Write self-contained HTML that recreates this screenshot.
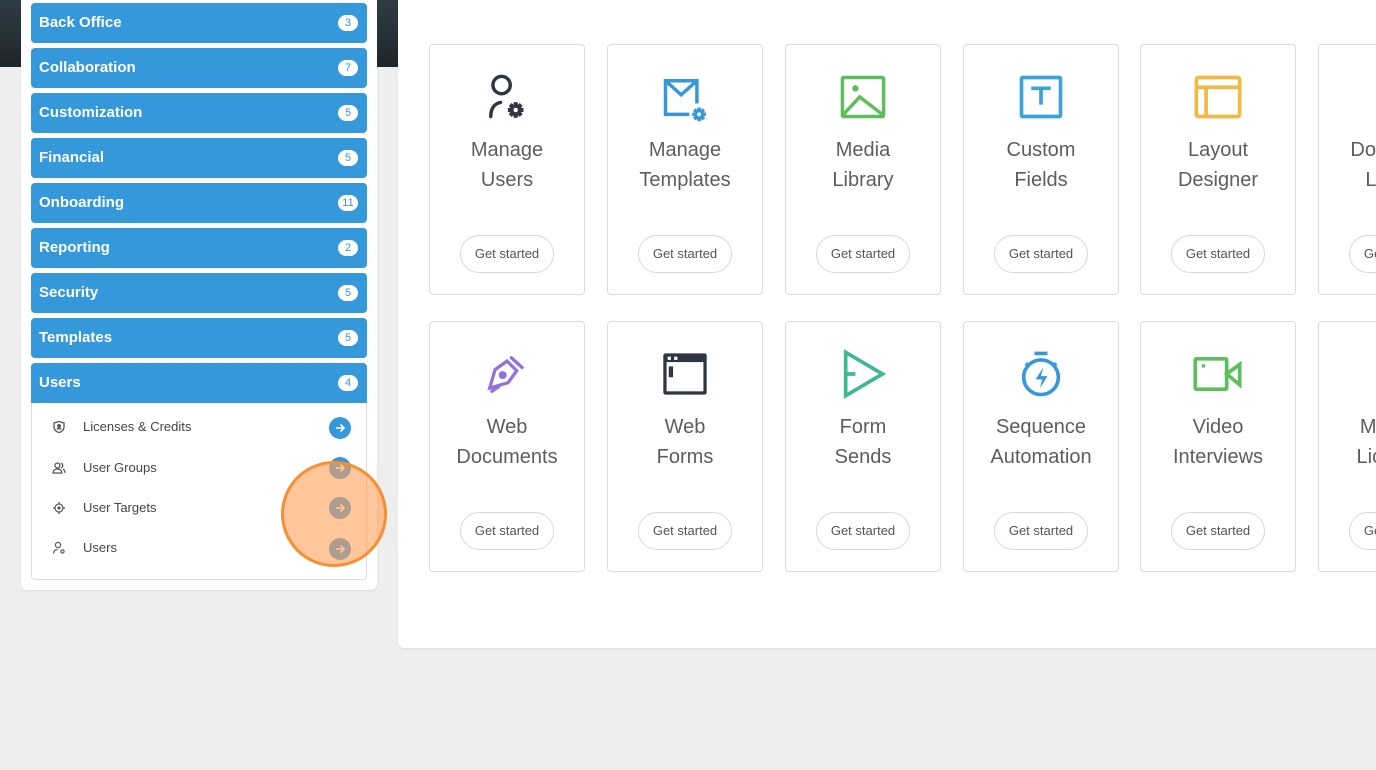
<!DOCTYPE html>
<html><head><meta charset="utf-8"><style>
*{box-sizing:border-box;margin:0;padding:0}
body{width:1376px;height:770px;background:#eeeeee;font-family:"Liberation Sans",sans-serif;position:relative;overflow:hidden}
.hdr{position:absolute;left:0;top:0;width:398px;height:67px;background:linear-gradient(#2e3c44,#1f262b)}
.side{position:absolute;left:21px;top:-8px;width:356px;height:598px;background:#fff;border-radius:6px;box-shadow:0 1px 2px rgba(0,0,0,.08)}
.mi{position:absolute;left:31px;width:336px;height:40px;background:#3598db;border-radius:4px;color:#fff;font-weight:bold;font-size:15px;line-height:40px;padding-left:8px}
.mi.open{border-radius:4px 4px 0 0}
.bd{position:absolute;right:9px;top:12px;height:16px;min-width:20px;padding:0 4px;border-radius:8px;background:#fff;color:#3598db;font-size:11px;font-weight:normal;line-height:16px;text-align:center}
.sub{position:absolute;left:31px;top:403px;width:336px;height:177px;border:1px solid #ddd;border-top:none;border-radius:0 0 4px 4px}
.si{position:absolute;left:52px;font-size:13px;color:#444;height:20px;line-height:20px;padding-left:31px}
.si svg{position:absolute;left:0;top:3px}
.ar{position:absolute;left:329px;width:22px;height:22px;border-radius:50%;background:#3598db}
.ar svg{position:absolute;left:5px;top:5px}
.main{position:absolute;left:398px;top:0;width:978px;height:648px;background:#fff;border-radius:0 0 0 6px;box-shadow:0 1px 2px rgba(0,0,0,.08)}
.card{position:absolute;width:156px;height:251px;border:1px solid #dcdcdc;border-radius:4px;background:#fff;text-align:center}
.card .ic{position:absolute;left:50%;top:26px;margin-left:-26px;width:52px;height:52px}
.card .t{position:absolute;left:-20px;right:-20px;top:90px;font-size:20px;line-height:30px;color:#5d5d5d;white-space:nowrap}
.card .b{position:absolute;left:50%;top:190px;margin-left:-47px;width:94px;height:38px;border:1px solid #d8d8d8;border-radius:19px;font-size:13px;line-height:36px;color:#555}
.circ{position:absolute;left:281px;top:461px;width:106px;height:106px;border-radius:50%;background:rgba(255,160,90,.6);border:3px solid #f78f32}
</style></head><body>
<svg width="0" height="0" style="position:absolute"><defs>
<g id="gear"><g><rect x="-1.6" y="-6" width="3.2" height="12"/><rect x="-1.6" y="-6" width="3.2" height="12" transform="rotate(45)"/><rect x="-1.6" y="-6" width="3.2" height="12" transform="rotate(90)"/><rect x="-1.6" y="-6" width="3.2" height="12" transform="rotate(135)"/><circle r="4.3"/></g><circle r="1.7" fill="#fff"/></g>
</defs></svg>
<div class="hdr"></div>
<div class="side"></div>
<div class="mi" style="top:3px">Back Office<span class="bd">3</span></div>
<div class="mi" style="top:48px">Collaboration<span class="bd">7</span></div>
<div class="mi" style="top:93px">Customization<span class="bd">5</span></div>
<div class="mi" style="top:138px">Financial<span class="bd">5</span></div>
<div class="mi" style="top:183px">Onboarding<span class="bd">11</span></div>
<div class="mi" style="top:228px">Reporting<span class="bd">2</span></div>
<div class="mi" style="top:273px">Security<span class="bd">5</span></div>
<div class="mi" style="top:318px">Templates<span class="bd">5</span></div>
<div class="mi open" style="top:363px">Users<span class="bd">4</span></div>
<div class="sub"></div>
<div class="si" style="top:417px"><svg width="14" height="14" viewBox="0 0 14 14" fill="none" stroke="#555" stroke-width="1.3"><path d="M7 1.5L12 3v4c0 3-2.5 5-5 5.5C4.5 12 2 10 2 7V3z"/><circle cx="7" cy="6" r="1.3" fill="#555"/><path d="M4.8 9.3c.6-1 3.8-1 4.4 0"/></svg>Licenses &amp; Credits</div>
<div class="si" style="top:458px"><svg width="14" height="14" viewBox="0 0 14 14" fill="none" stroke="#555" stroke-width="1.2"><circle cx="5.5" cy="4.5" r="2.5"/><path d="M1 12c0-2.5 2-4 4.5-4s4.5 1.5 4.5 4z"/><path d="M9 2.2a2.4 2.4 0 0 1 0 4.6M11 8.2c1.3.6 2 1.8 2 3.8"/></svg>User Groups</div>
<div class="si" style="top:498px"><svg width="14" height="14" viewBox="0 0 14 14" fill="none" stroke="#555" stroke-width="1.2"><circle cx="7" cy="7" r="4"/><circle cx="7" cy="7" r="1" fill="#555"/><path d="M7 1v2M7 11v2M1 7h2M11 7h2"/></svg>User Targets</div>
<div class="si" style="top:538px"><svg width="14" height="14" viewBox="0 0 14 14" fill="none" stroke="#555" stroke-width="1.2"><circle cx="6" cy="4" r="2.6"/><path d="M1.5 12.5c0-2.5 2-4 4-4"/><circle cx="10.5" cy="10.5" r="1.6"/></svg>Users</div>
<div class="ar" style="top:417px"><svg width="12" height="12" viewBox="0 0 12 12" fill="none" stroke="#fff" stroke-width="1.6"><path d="M2 6h8M6.5 2.5L10 6l-3.5 3.5"/></svg></div>
<div class="ar" style="top:457px"><svg width="12" height="12" viewBox="0 0 12 12" fill="none" stroke="#fff" stroke-width="1.6"><path d="M2 6h8M6.5 2.5L10 6l-3.5 3.5"/></svg></div>
<div class="ar" style="top:497px"><svg width="12" height="12" viewBox="0 0 12 12" fill="none" stroke="#fff" stroke-width="1.6"><path d="M2 6h8M6.5 2.5L10 6l-3.5 3.5"/></svg></div>
<div class="ar" style="top:538px"><svg width="12" height="12" viewBox="0 0 12 12" fill="none" stroke="#fff" stroke-width="1.6"><path d="M2 6h8M6.5 2.5L10 6l-3.5 3.5"/></svg></div>
<div class="circ"></div>

<div class="main"></div>
<!-- row 1 -->
<div class="card" style="left:429px;top:44px"><svg class="ic" viewBox="0 0 48 48" fill="none" stroke="#2f3542" stroke-width="3.2" stroke-linecap="round"><circle cx="19" cy="13" r="8"/><path d="M9 42c0-8 4-12 9-13"/><use href="#gear" transform="translate(32,36) scale(1.2)" fill="#2f3542" stroke="none"/></svg><div class="t">Manage<br>Users</div><div class="b">Get started</div></div>
<div class="card" style="left:607px;top:44px"><svg class="ic" viewBox="0 0 48 48" fill="none" stroke="#3598db" stroke-width="3.2"><path d="M35 30V9H6v31h22"/><path d="M6 9l14.5 13L35 9"/><use href="#gear" transform="translate(37,40) scale(1.05)" fill="#3598db" stroke="none"/></svg><div class="t">Manage<br>Templates</div><div class="b">Get started</div></div>
<div class="card" style="left:785px;top:44px"><svg class="ic" viewBox="0 0 48 48" fill="none" stroke="#5cbf5c" stroke-width="3.2"><rect x="5" y="6" width="38" height="36" rx="1"/><circle cx="17" cy="16" r="3" fill="#5cbf5c" stroke="none"/><path d="M5 41l16-17 22 17"/></svg><div class="t">Media<br>Library</div><div class="b">Get started</div></div>
<div class="card" style="left:963px;top:44px"><svg class="ic" viewBox="0 0 48 48" fill="none" stroke="#3aa4d4" stroke-width="3.4"><rect x="6" y="6" width="36" height="36" rx="1"/><path d="M15 16h18M24 16v15"/></svg><div class="t">Custom<br>Fields</div><div class="b">Get started</div></div>
<div class="card" style="left:1140px;top:44px"><svg class="ic" viewBox="0 0 48 48" fill="none" stroke="#f0b845" stroke-width="3.4"><rect x="4" y="6" width="40" height="36" rx="2"/><path d="M4 15h40M13 15v27"/></svg><div class="t">Layout<br>Designer</div><div class="b">Get started</div></div>
<div class="card" style="left:1318px;top:44px"><div class="t">Document<br>Library</div><div class="b">Get started</div></div>
<!-- row 2 -->
<div class="card" style="left:429px;top:321px"><svg class="ic" viewBox="0 0 48 48" fill="none" stroke="#9370db" stroke-width="3" stroke-linecap="round"><path d="M8 37l5-17 11-8 9 9-8 11z"/><circle cx="20" cy="25" r="2.2" fill="#9370db"/><path d="M28 9l10 9M10 40l6-4"/></svg><div class="t">Web<br>Documents</div><div class="b">Get started</div></div>
<div class="card" style="left:607px;top:321px"><svg class="ic" viewBox="0 0 48 48"><rect x="4" y="5" width="40" height="38" rx="2" fill="#2f3542"/><rect x="7" y="13" width="34" height="27" fill="#fff"/><rect x="8" y="8" width="3" height="3" fill="#fff"/><rect x="14" y="8" width="3" height="3" fill="#fff"/><rect x="9" y="17" width="4" height="10" fill="#2f3542"/></svg><div class="t">Web<br>Forms</div><div class="b">Get started</div></div>
<div class="card" style="left:785px;top:321px"><svg class="ic" viewBox="0 0 48 48" fill="none" stroke="#3db88f" stroke-width="3.4"><path d="M8 4v40l34-20z"/><path d="M8 24h9"/></svg><div class="t">Form<br>Sends</div><div class="b">Get started</div></div>
<div class="card" style="left:963px;top:321px"><svg class="ic" viewBox="0 0 48 48" fill="none" stroke="#3598db" stroke-width="3.4"><circle cx="24" cy="27" r="16"/><path d="M18 5h12M10 14l3 3M38 14l-3 3"/><path d="M26 18l-7 11h6l-2 8 7-11h-6z" fill="#3598db" stroke="none"/></svg><div class="t">Sequence<br>Automation</div><div class="b">Get started</div></div>
<div class="card" style="left:1140px;top:321px"><svg class="ic" viewBox="0 0 48 48" fill="none" stroke="#5cbf5c" stroke-width="3.4"><rect x="3" y="10" width="29" height="28" rx="1"/><path d="M32 24l12-9v19z"/><rect x="9" y="15" width="3" height="3" fill="#5cbf5c" stroke="none"/></svg><div class="t">Video<br>Interviews</div><div class="b">Get started</div></div>
<div class="card" style="left:1318px;top:321px"><div class="t">Manage<br>Licenses</div><div class="b">Get started</div></div>
</body></html>
